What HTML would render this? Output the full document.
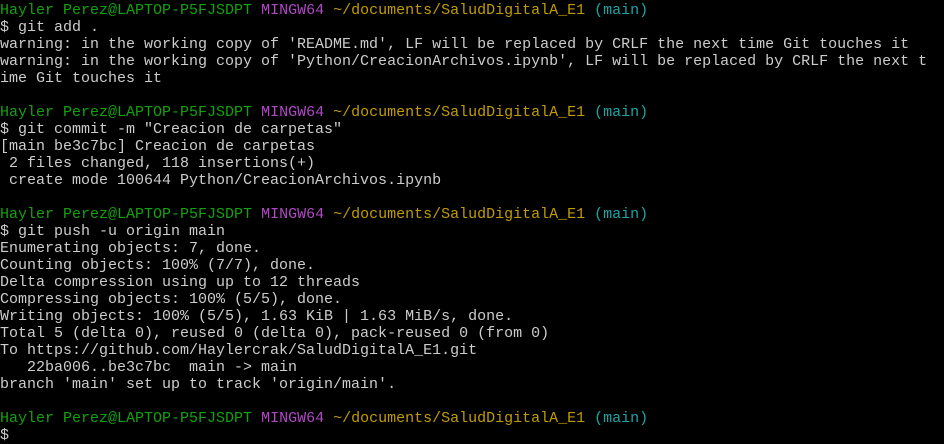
<!DOCTYPE html><html><head><style>
body{margin:0;background:#000;width:944px;height:439px;overflow:hidden}
pre{margin:0;padding:2px 0 0 0;font-family:"Liberation Mono",monospace;font-size:15px;line-height:17px;color:#cccccc;white-space:pre}
.g{color:#13a10e}.m{color:#b148c6}.y{color:#c19c00}.c{color:#1aa5a5}
</style></head><body><pre><span class="g">Hayler Perez@LAPTOP-P5FJSDPT</span> <span class="m">MINGW64</span> <span class="y">~/documents/SaludDigitalA_E1</span> <span class="c">(main)</span>
$ git add .
warning: in the working copy of 'README.md', LF will be replaced by CRLF the next time Git touches it
warning: in the working copy of 'Python/CreacionArchivos.ipynb', LF will be replaced by CRLF the next t
ime Git touches it

<span class="g">Hayler Perez@LAPTOP-P5FJSDPT</span> <span class="m">MINGW64</span> <span class="y">~/documents/SaludDigitalA_E1</span> <span class="c">(main)</span>
$ git commit -m "Creacion de carpetas"
[main be3c7bc] Creacion de carpetas
 2 files changed, 118 insertions(+)
 create mode 100644 Python/CreacionArchivos.ipynb

<span class="g">Hayler Perez@LAPTOP-P5FJSDPT</span> <span class="m">MINGW64</span> <span class="y">~/documents/SaludDigitalA_E1</span> <span class="c">(main)</span>
$ git push -u origin main
Enumerating objects: 7, done.
Counting objects: 100% (7/7), done.
Delta compression using up to 12 threads
Compressing objects: 100% (5/5), done.
Writing objects: 100% (5/5), 1.63 KiB | 1.63 MiB/s, done.
Total 5 (delta 0), reused 0 (delta 0), pack-reused 0 (from 0)
To https://github.com/Haylercrak/SaludDigitalA_E1.git
   22ba006..be3c7bc  main -&gt; main
branch 'main' set up to track 'origin/main'.

<span class="g">Hayler Perez@LAPTOP-P5FJSDPT</span> <span class="m">MINGW64</span> <span class="y">~/documents/SaludDigitalA_E1</span> <span class="c">(main)</span>
$
</pre></body></html>
